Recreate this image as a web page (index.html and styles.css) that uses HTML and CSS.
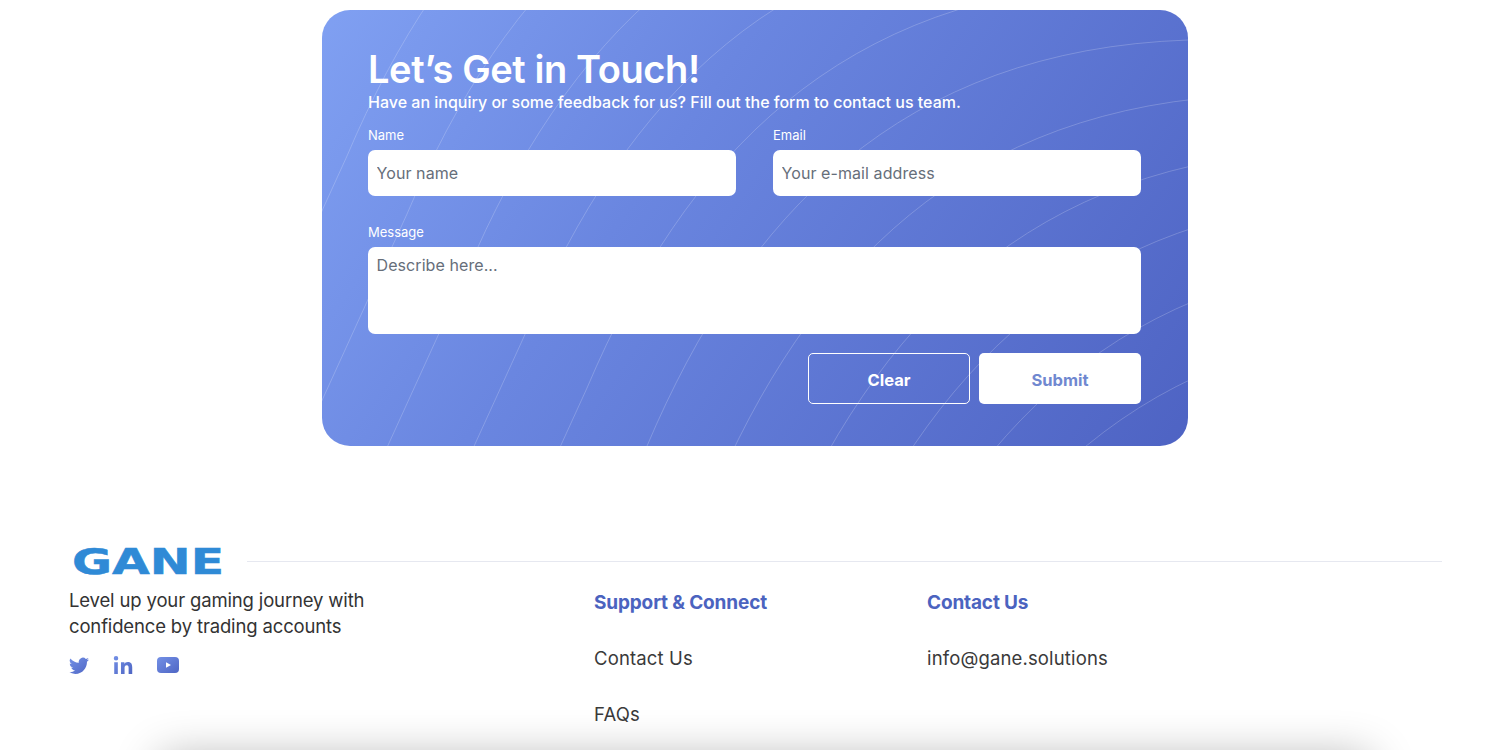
FILE: index.html
```html
<!DOCTYPE html>
<html>
<head>
    <title>Gane - Contact</title>
    <meta name="viewport" content="width=device-width, initial-scale=1">
    <link rel="stylesheet" href="styles.css">
</head>
<body>
    <section class="contact">
        <div class="contact-card">
            <!-- curved lines behind the form -->
            <svg class="card-lines" width="866" height="436" viewBox="322 10 866 436">
                <defs>
                    <path id="arc" d="M554 650 L647 446 C745 215 900 50 1188 40 L1700 38"/>
                </defs>
                <use href="#arc" transform="translate(-360 -348)"/>
                <use href="#arc" transform="translate(-300 -290)"/>
                <use href="#arc" transform="translate(-240 -232)"/>
                <use href="#arc" transform="translate(-180 -174)"/>
                <use href="#arc" transform="translate(-120 -116)"/>
                <use href="#arc" transform="translate(-60 -58)"/>
                <use href="#arc"/>
                <use href="#arc" transform="translate(63 55)"/>
                <use href="#arc" transform="translate(130 110)"/>
                <use href="#arc" transform="translate(182 158)"/>
                <use href="#arc" transform="translate(221 217)"/>
                <use href="#arc" transform="translate(241 285)"/>
            </svg>

            <form class="contact-form">
                <h1>Let’s Get in Touch!</h1>
                <p class="intro">Have an inquiry or some feedback for us? Fill out the form to contact us team.</p>

                <div class="field-row">
                    <div class="field">
                        <label for="name">Name</label>
                        <input type="text" id="name" placeholder="Your name">
                    </div>
                    <div class="field">
                        <label for="email">Email</label>
                        <input type="text" id="email" placeholder="Your e-mail address">
                    </div>
                </div>

                <div class="field field-message">
                    <label for="message">Message</label>
                    <textarea id="message" placeholder="Describe here..."></textarea>
                </div>

                <div class="button-row">
                    <button type="button" class="btn btn-clear">Clear</button>
                    <button type="button" class="btn btn-submit">Submit</button>
                </div>
            </form>
        </div>
    </section>

    <footer class="footer">
        <div class="footer-top">
            <svg class="logo" width="152" height="28" viewBox="0 0 152 28">
                <text x="0" y="26.5" textLength="152" lengthAdjust="spacingAndGlyphs">GANE</text>
            </svg>
            <div class="footer-line"></div>
        </div>

        <div class="footer-columns">
            <div class="footer-brand">
                <p class="tagline">Level up your gaming journey with confidence by trading accounts</p>
                <div class="social">
                    <svg class="icon-twitter" width="20" height="17" viewBox="0 0 16 13.5">
                        <defs>
                            <linearGradient id="iconFill" x1="0" y1="0" x2="1" y2="1">
                                <stop offset="0" stop-color="#7390e6"/>
                                <stop offset="1" stop-color="#4f66c4"/>
                            </linearGradient>
                        </defs>
                        <path fill="url(#iconFill)" transform="translate(0 -1.5)" d="M5.026 15c6.038 0 9.341-5.003 9.341-9.334 0-.14 0-.282-.006-.422A6.685 6.685 0 0 0 16 3.542a6.658 6.658 0 0 1-1.889.518 3.301 3.301 0 0 0 1.447-1.817 6.533 6.533 0 0 1-2.087.793A3.286 3.286 0 0 0 7.875 6.03a9.325 9.325 0 0 1-6.767-3.429 3.289 3.289 0 0 0 1.018 4.382A3.323 3.323 0 0 1 .64 6.575v.045a3.288 3.288 0 0 0 2.632 3.218 3.203 3.203 0 0 1-.865.115 3.23 3.23 0 0 1-.614-.057 3.283 3.283 0 0 0 3.067 2.277A6.588 6.588 0 0 1 .78 13.58a6.32 6.32 0 0 1-.78-.045A9.344 9.344 0 0 0 5.026 15z"/>
                    </svg>
                    <svg class="icon-linkedin" width="20" height="18" viewBox="0 1 20.5 20">
                        <path fill="url(#iconFill)" d="M4.98 3.5a2.5 2.5 0 1 1-5 0 2.5 2.5 0 0 1 5 0zM.5 8h4v13h-4zM8 8h3.8v1.8c.5-1 1.8-2.1 3.8-2.1 4.1 0 4.9 2.7 4.9 6.2V21h-4v-6.3c0-1.5 0-3.4-2.1-3.4s-2.4 1.6-2.4 3.3V21H8z"/>
                    </svg>
                    <svg class="icon-youtube" width="22" height="16" viewBox="0 0 22 16">
                        <rect width="22" height="16" rx="4" fill="url(#iconFill)"/>
                        <path fill="#fff" d="M9 5.2 14 8 9 10.8z"/>
                    </svg>
                </div>
            </div>

            <div class="footer-col footer-support">
                <h3>Support &amp; Connect</h3>
                <a href="#">Contact Us</a>
                <a href="#">FAQs</a>
            </div>

            <div class="footer-col">
                <h3>Contact Us</h3>
                <a href="#">info@gane.solutions</a>
            </div>
        </div>
    </footer>

    <div class="bottom-shadow"></div>
</body>
</html>
```

FILE: styles.css
```css
body {
    font-family: Inter, "Noto Sans", Arial, sans-serif;
    background-color: #fff;
    margin: 0;
    padding: 0;
    height: 750px;
    overflow: hidden;
    position: relative;
}

.contact {
    display: flex;
    justify-content: center;
    padding: 10px 0 0 10px;
}

.contact-card {
    position: relative;
    overflow: hidden;
    width: 866px;
    height: 436px;
    box-sizing: border-box;
    border-radius: 28px;
    background: linear-gradient(125deg, #80a0f2 0%, #6a86e0 38%, #4e63c3 100%);
}

.card-lines {
    position: absolute;
    top: 0;
    left: 0;
    fill: none;
    stroke: rgba(255, 255, 255, 0.2);
    stroke-width: 1;
}

.contact-form {
    position: relative;
    padding: 36px 47px 0 46px;
}

h1 {
    color: #fff;
    font-size: 38px;
    font-weight: 600;
    line-height: 46px;
    letter-spacing: -0.4px;
    margin: 0;
}

.intro {
    color: #fff;
    font-size: 16px;
    font-weight: 500;
    line-height: 20px;
    margin: 0 0 14px;
}

.field-row {
    display: flex;
    gap: 37px;
}

.field {
    flex: 1;
}

.field label {
    display: block;
    color: #fff;
    font-size: 13px;
    line-height: 18px;
    margin-bottom: 6px;
}

.field input,
.field textarea {
    display: block;
    width: 100%;
    box-sizing: border-box;
    border: none;
    border-radius: 7px;
    background-color: #fff;
    font-family: inherit;
    font-size: 16px;
    letter-spacing: 0.08px;
    color: #333;
    padding: 0 8.5px;
    outline: none;
}

.field input {
    height: 46px;
}

.field textarea {
    height: 87px;
    padding-top: 8px;
    resize: none;
}

.field input::placeholder,
.field textarea::placeholder {
    color: #666e7a;
    opacity: 1;
}

.field-message {
    margin-top: 27px;
}

.button-row {
    display: flex;
    justify-content: flex-end;
    gap: 9px;
    margin-top: 19px;
}

.btn {
    width: 162px;
    height: 51px;
    box-sizing: border-box;
    border-radius: 5px;
    padding: 2px 0 0;
    font-family: inherit;
    font-size: 16.5px;
    font-weight: 700;
    cursor: pointer;
}

.btn-clear {
    background: transparent;
    border: 1px solid #fff;
    color: #fff;
}

.btn-submit {
    background-color: #fff;
    border: none;
    color: #7088d0;
}

.footer {
    padding: 101px 58px 0 69px;
}

.footer-top {
    display: flex;
    align-items: center;
    gap: 23px;
    padding-left: 3px;
}

.logo {
    flex-shrink: 0;
    overflow: visible;
}

.logo text {
    font-family: "DejaVu Sans", sans-serif;
    font-size: 36px;
    font-weight: 700;
    fill: #2f8ad6;
    stroke: #2f8ad6;
    stroke-width: 0.5;
}

.footer-line {
    flex: 1;
    height: 1px;
    background-color: #e6e8f0;
}

.footer-columns {
    display: grid;
    grid-template-columns: 525px 333px 1fr;
    margin-top: 12px;
}

.tagline {
    width: 310px;
    color: #333;
    font-size: 18.5px;
    line-height: 26px;
    letter-spacing: -0.15px;
    margin: 0;
}

.social {
    display: flex;
    align-items: center;
    gap: 24px;
    margin-top: 17px;
}

.footer-col h3 {
    color: #4b63bf;
    font-size: 19px;
    font-weight: 700;
    line-height: 26px;
    letter-spacing: -0.15px;
    margin: 3px 0 29px;
}

.footer-col a {
    display: block;
    color: #3a3a3a;
    font-size: 18.5px;
    letter-spacing: 0.15px;
    line-height: 26px;
    text-decoration: none;
    margin-bottom: 30px;
}

.bottom-shadow {
    position: absolute;
    left: 165px;
    top: 762px;
    width: 1200px;
    height: 100px;
    box-shadow: 0 0 45px 5px rgba(0, 0, 0, 0.3);
}
```
